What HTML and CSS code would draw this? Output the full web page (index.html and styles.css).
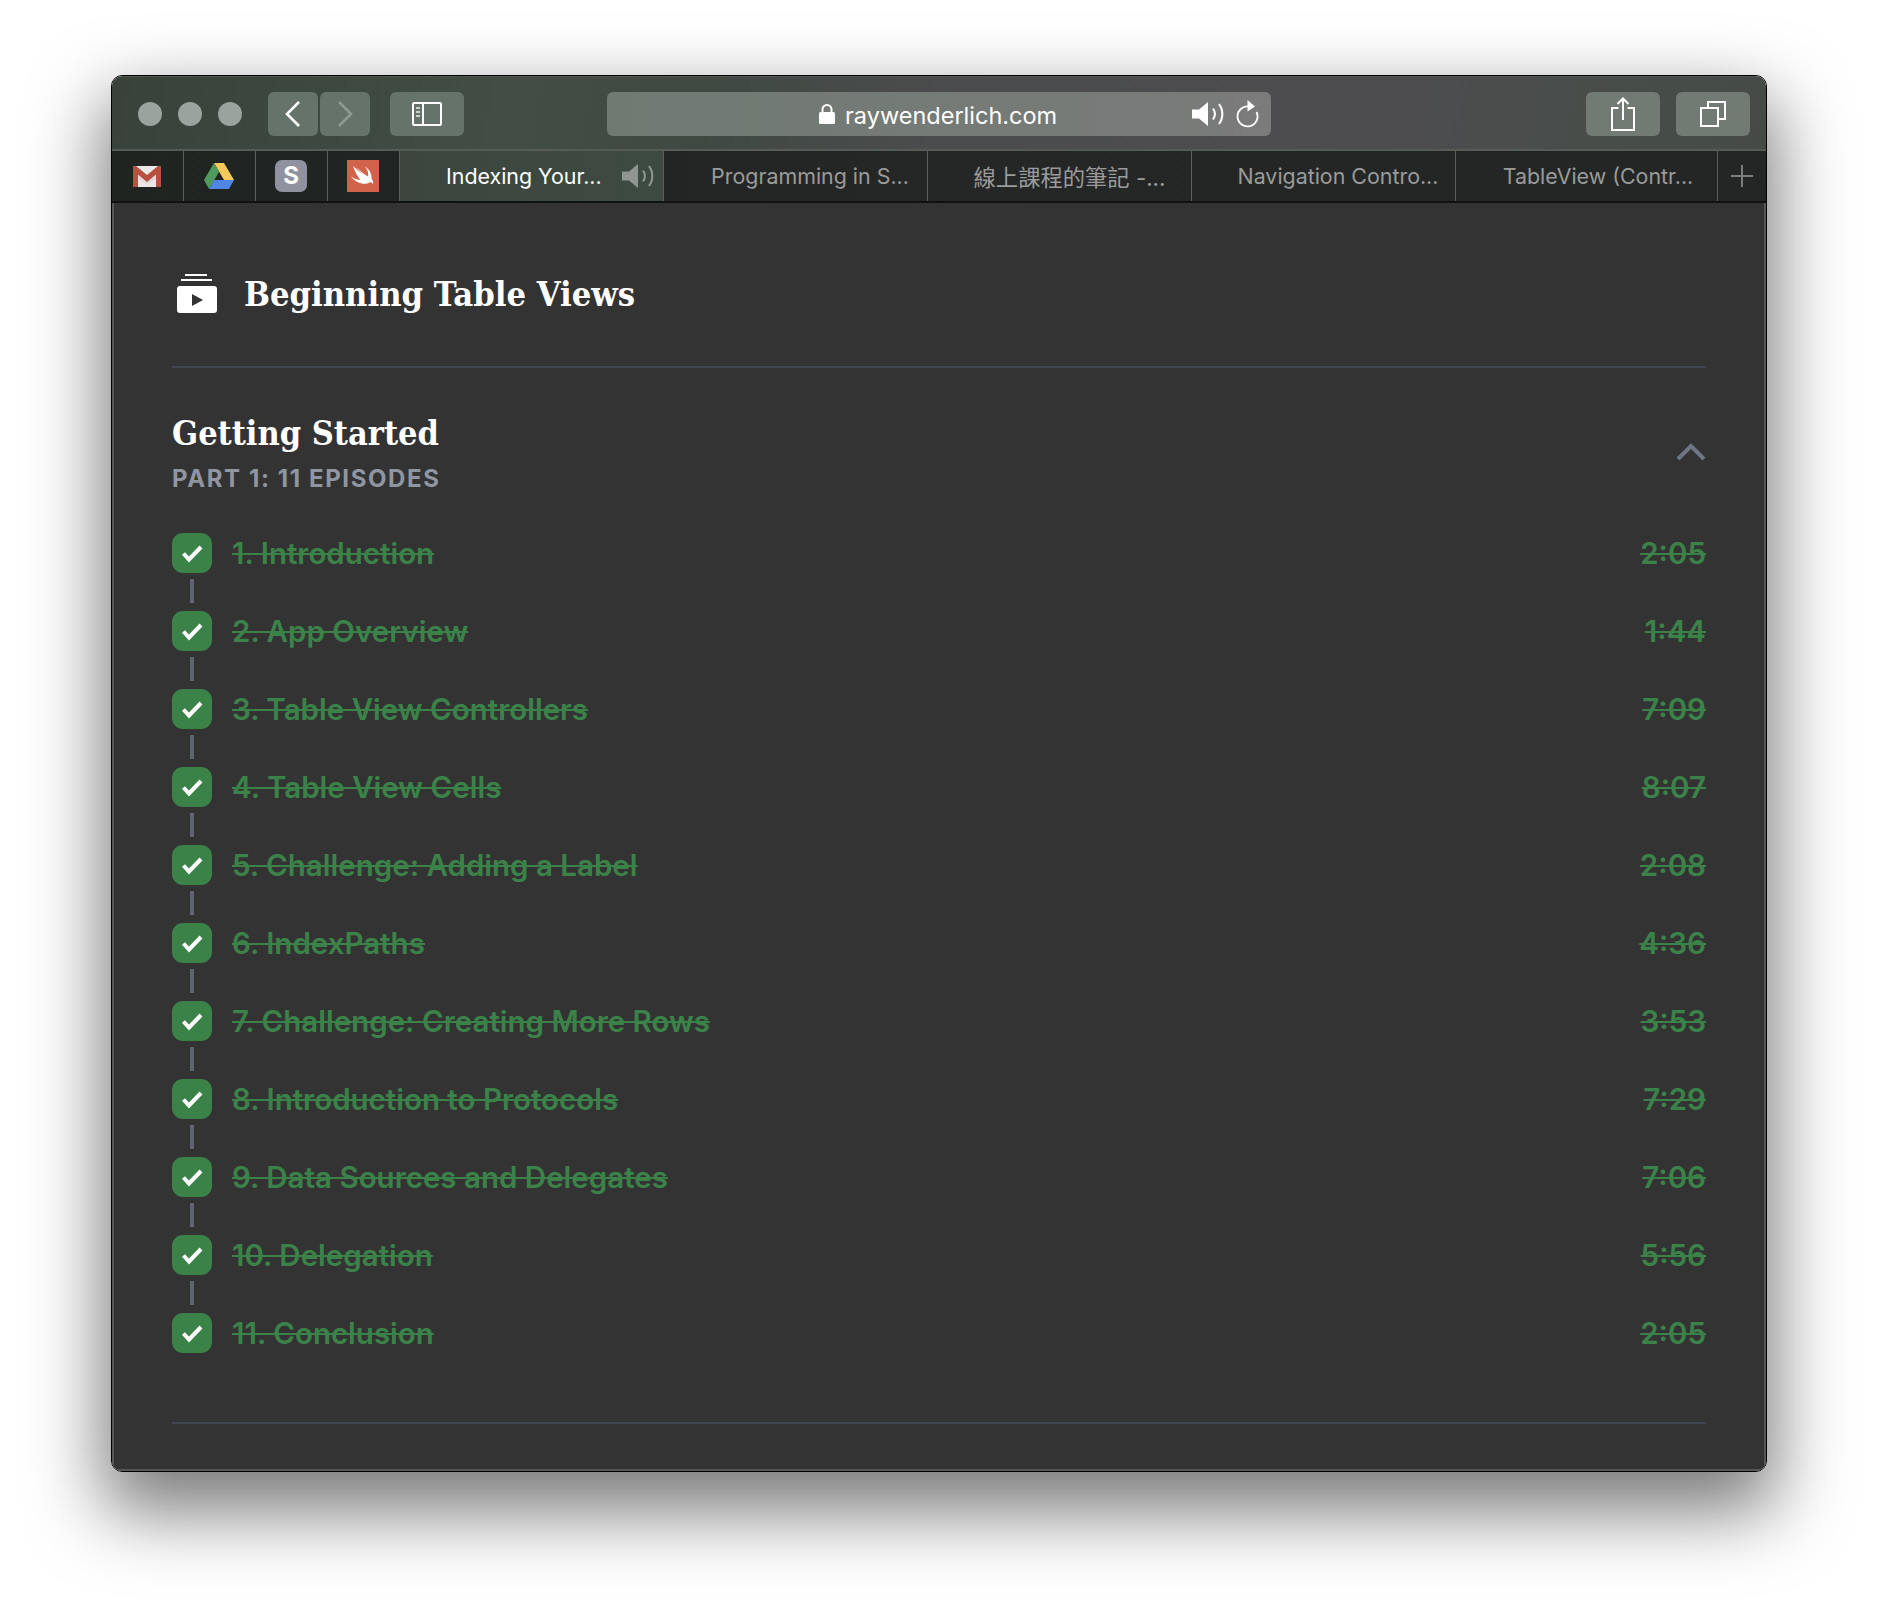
FILE: index.html
```html
<!DOCTYPE html>
<html lang="en">
<head>
  <meta charset="UTF-8" />
  <title>Beginning Table Views</title>
  <link rel="stylesheet" href="styles.css">
</head>

<body>
  <svg class="defs" width="0" height="0">
    <symbol id="speaker" viewBox="0 0 34 26">
      <path d="M0 8.5h7L16 1v24l-9-7.500H0z" fill="currentColor" />
      <path d="M21 7.500c2.500 3.500 2.500 7.500 0 11M27 3c4.500 6 4.500 14 0 20" fill="none" stroke="currentColor" stroke-width="2" />
    </symbol>
    <symbol id="check" viewBox="0 0 40 40">
      <path d="M11.500 20.500l5.500 6L29 14" fill="none" stroke="#fff" stroke-width="4" />
    </symbol>
  </svg>

  <div class="window">
    <div class="toolbar">
      <div class="lights"><i></i><i></i><i></i></div>
      <div class="nav">
        <button class="btn btn-nav">
          <svg width="18" height="28" viewBox="0 0 18 28"><path d="M15 2L3 14l12 12" fill="none" stroke="#fff" stroke-width="2.600" /></svg>
        </button>
        <button class="btn btn-nav">
          <svg width="18" height="28" viewBox="0 0 18 28"><path d="M3 2l12 12L3 26" fill="none" stroke="#8d9a90" stroke-width="2.600" /></svg>
        </button>
      </div>
      <button class="btn btn-side">
        <svg width="30" height="24" viewBox="0 0 30 24" fill="none" stroke="#fff" stroke-width="2">
          <rect x="1" y="1" width="28" height="22" rx="1" />
          <path d="M11 1v22" />
          <path d="M4 6h4M4 10h4M4 14h4" stroke="#c9d0cb" />
        </svg>
      </button>
      <div class="address">
        <svg class="lock" width="16" height="20" viewBox="0 0 16 20">
          <path d="M3.500 9V5.500a4.500 4.500 0 0 1 9 0V9" fill="none" stroke="#fff" stroke-width="2" />
          <rect x="0" y="8" width="16" height="12" rx="1.500" fill="#fff" />
        </svg>
        <span class="url">raywenderlich.com</span>
        <svg class="addr-speaker" width="34" height="26"><use href="#speaker" /></svg>
        <svg class="reload" width="24" height="28" viewBox="0 0 24 28">
          <path d="M14 6.500A10 10 0 1 0 21.500 12" fill="none" stroke="#fff" stroke-width="1.800" />
          <path d="M12.500 0l7.500 6.500-7.500 5z" fill="#fff" />
        </svg>
      </div>
      <button class="btn btn-tool">
        <svg width="24" height="34" viewBox="0 0 24 34" fill="none" stroke="#fff" stroke-width="2">
          <path d="M7.500 11H1v22h22V11h-6.500M12 23V2M6.500 7L12 1.500 17.500 7" />
        </svg>
      </button>
      <button class="btn btn-tool">
        <svg width="26" height="26" viewBox="0 0 26 26" fill="none" stroke="#fff" stroke-width="2">
          <rect x="1" y="7" width="17" height="18" />
          <path d="M8 7V1h17v17h-7" />
        </svg>
      </button>
    </div>

    <div class="tabbar">
      <div class="pin">
        <svg width="28" height="21" viewBox="0 0 28 21">
          <rect width="28" height="21" rx="1.500" fill="#e8e8e8" />
          <path d="M0 2l14 11L28 2v8L14 19 0 10z" fill="#dcdcdc" />
          <path d="M0 1.500C0 .5 1 0 2 0h1l11 9 11-9h1c1 0 2 .5 2 1.500V21h-5V8.500L14 16 5 8.500V21H0z" fill="#b94f3f" />
        </svg>
      </div>
      <div class="pin">
        <svg width="30" height="26" viewBox="0 0 30 26">
          <path d="M10 0h10l10 17h-10z" fill="#f5c95c" />
          <path d="M10 0l5 9L5 26 0 17z" fill="#4f9a5d" />
          <path d="M10 17h20l-5 9H5z" fill="#4f86e4" />
        </svg>
      </div>
      <div class="pin"><span class="s-icon">S</span></div>
      <div class="pin">
        <svg width="32" height="32" viewBox="0 0 32 32">
          <rect width="32" height="32" fill="#d0634a" />
          <path d="M6 6c4 4 8 7 12 10C14 13 11 10 9 7c3 3 8 7 12 9.500 .8-3.500-.5-7-3-10 4 2.500 7 7 6.500 12 1.500 2 2 4 1.500 5.500-1-1.500-2.500-2-3.500-1.500-3 2-8 1.500-12-.5-3-1.500-5-3.500-6.500-5.500 3 2 6.500 3.500 9.500 3.500C11 17 8 12 6 6z" fill="#fff" />
        </svg>
      </div>
      <div class="tab tab-active">
        <span class="tab-title">Indexing Your...</span>
        <svg class="tab-speaker" width="34" height="26"><use href="#speaker" /></svg>
      </div>
      <div class="tab"><span class="tab-title">Programming in S...</span></div>
      <div class="tab tab-cjk"><span class="tab-title">線上課程的筆記 -...</span></div>
      <div class="tab"><span class="tab-title">Navigation Contro...</span></div>
      <div class="tab tab-last"><span class="tab-title">TableView (Contr...</span></div>
      <div class="tab-add">
        <svg width="22" height="22" viewBox="0 0 22 22"><path d="M11 0v22M0 11h22" stroke="#7b7d7c" stroke-width="2" /></svg>
      </div>
    </div>

    <div class="content">
      <div class="course-head">
        <svg class="course-icon" width="40" height="39" viewBox="0 0 40 39">
          <path d="M8 1h22M4 6h31" stroke="#fff" stroke-width="2" />
          <rect y="12" width="40" height="27" rx="3" fill="#fff" />
          <path d="M15 20l11 6-11 6z" fill="#333" />
        </svg>
        <h1>Beginning Table Views</h1>
      </div>

      <div class="part-head">
        <div>
          <h2>Getting Started</h2>
          <div class="part-sub">PART 1: 11 EPISODES</div>
        </div>
        <svg class="chevron" width="30" height="19" viewBox="0 0 30 19"><path d="M2 17L15 4l13 13" fill="none" stroke="#6e7685" stroke-width="4" /></svg>
      </div>

      <ul class="episodes">
        <li class="ep"><div class="mark"><svg class="tick" width="40" height="40"><use href="#check" /></svg><i class="link"></i></div><span class="ep-name">1. Introduction</span><span class="ep-time">2:05</span></li>
        <li class="ep"><div class="mark"><svg class="tick" width="40" height="40"><use href="#check" /></svg><i class="link"></i></div><span class="ep-name">2. App Overview</span><span class="ep-time">1:44</span></li>
        <li class="ep"><div class="mark"><svg class="tick" width="40" height="40"><use href="#check" /></svg><i class="link"></i></div><span class="ep-name">3. Table View Controllers</span><span class="ep-time">7:09</span></li>
        <li class="ep"><div class="mark"><svg class="tick" width="40" height="40"><use href="#check" /></svg><i class="link"></i></div><span class="ep-name">4. Table View Cells</span><span class="ep-time">8:07</span></li>
        <li class="ep"><div class="mark"><svg class="tick" width="40" height="40"><use href="#check" /></svg><i class="link"></i></div><span class="ep-name">5. Challenge: Adding a Label</span><span class="ep-time">2:08</span></li>
        <li class="ep"><div class="mark"><svg class="tick" width="40" height="40"><use href="#check" /></svg><i class="link"></i></div><span class="ep-name">6. IndexPaths</span><span class="ep-time">4:36</span></li>
        <li class="ep"><div class="mark"><svg class="tick" width="40" height="40"><use href="#check" /></svg><i class="link"></i></div><span class="ep-name">7. Challenge: Creating More Rows</span><span class="ep-time">3:53</span></li>
        <li class="ep"><div class="mark"><svg class="tick" width="40" height="40"><use href="#check" /></svg><i class="link"></i></div><span class="ep-name">8. Introduction to Protocols</span><span class="ep-time">7:29</span></li>
        <li class="ep"><div class="mark"><svg class="tick" width="40" height="40"><use href="#check" /></svg><i class="link"></i></div><span class="ep-name">9. Data Sources and Delegates</span><span class="ep-time">7:06</span></li>
        <li class="ep"><div class="mark"><svg class="tick" width="40" height="40"><use href="#check" /></svg><i class="link"></i></div><span class="ep-name">10. Delegation</span><span class="ep-time">5:56</span></li>
        <li class="ep"><div class="mark"><svg class="tick" width="40" height="40"><use href="#check" /></svg></div><span class="ep-name">11. Conclusion</span><span class="ep-time">2:05</span></li>
      </ul>

      <div class="bottom-rule"></div>
    </div>
  </div>
</body>
</html>
```

FILE: styles.css
```css
body {
  margin: 0;
  padding: 75px 111px 148px 111px;
  background: #fff;
  font-family: "Inter", "Noto Sans CJK TC", sans-serif;
}

.defs {
  position: absolute;
}

.window {
  border: 1px solid #000;
  border-radius: 11px;
  overflow: hidden;
  box-shadow: 0 32px 72px 8px rgba(0, 0, 0, 0.52);
}

/* toolbar */
.toolbar {
  height: 75px;
  box-sizing: border-box;
  padding: 15px 16px 0 26px;
  display: flex;
  background: linear-gradient(100deg, #37423a 0%, #424d45 24%, #3f4942 36%, #4b4c4d 50%, #4d4d4f 78%, #464d48 93%, #454a47 100%);
  border-top: 1px solid #555;
  border-bottom: 2px solid #555c57;
}

.lights {
  display: flex;
  gap: 16px;
  padding-top: 10px;
  margin-right: 26px;
}

.lights i {
  width: 24px;
  height: 24px;
  border-radius: 50%;
  background: #9ba39e;
}

.btn {
  height: 44px;
  border: none;
  padding: 0;
  border-radius: 6px;
  background: #66736a;
  display: flex;
  align-items: center;
  justify-content: center;
}

.nav {
  display: flex;
  gap: 2px;
  margin-right: 20px;
}

.btn-nav {
  width: 50px;
}

.btn-side {
  width: 74px;
  margin-right: 143px;
}

.address {
  width: 664px;
  height: 44px;
  margin-right: 315px;
  border-radius: 6px;
  background: linear-gradient(90deg, #707a73, #7a7b7a);
  display: flex;
  align-items: center;
  color: #fff;
  padding-left: 212px;
  box-sizing: border-box;
}

.lock {
  margin-right: 10px;
}

.url {
  font-size: 23.500px;
  width: 211px;
  margin-top: 2px;
  white-space: nowrap;
}

.addr-speaker {
  margin-left: 136px;
  margin-right: 9px;
  width: 34px;
}

.btn-tool {
  width: 74px;
  background: #727a74;
}

.btn-tool + .btn-tool {
  margin-left: 16px;
}

/* tabs */
.tabbar {
  height: 50px;
  display: flex;
  background: linear-gradient(90deg, #1f2421, #252626 50%, #232624);
  border-bottom: 2px solid #111;
}

.pin {
  width: 70px;
  padding-right: 1px;
  border-right: 1px solid #5a5f5c;
  display: flex;
  align-items: center;
  justify-content: center;
}

.s-icon {
  width: 32px;
  height: 32px;
  border-radius: 7px;
  background: #90929f;
  color: #fff;
  font-size: 24px;
  font-weight: 700;
  line-height: 32px;
  text-align: center;
}

.tab {
  width: 264px;
  box-sizing: border-box;
  flex: none;
  padding-left: 29px;
  border-right: 1px solid #5a5f5c;
  display: flex;
  align-items: center;
  justify-content: center;
  color: #9a9b9a;
  font-size: 21.400px;
  white-space: nowrap;
}

.tab-cjk {
  padding-left: 20px;
  font-size: 22.300px;
}

.tab-last {
  width: 262px;
  padding-left: 23px;
}

.tab-active {
  background: linear-gradient(90deg, #3b463f, #3d4a41);
  color: #fff;
  justify-content: flex-start;
  padding-left: 0;
}

.tab-active .tab-title {
  margin-left: 46px;
  width: 176px;
}

.tab-speaker {
  color: #8f9692;
}

.tab-add {
  flex: 1;
  display: flex;
  align-items: center;
  justify-content: center;
}

/* page content */
.content {
  background: #333;
  padding: 71px 60px 0 60px;
  height: 1268px;
  box-sizing: border-box;
  box-shadow: inset 2px 0 0 #565656, inset -2px 0 0 #565656, inset 0 -2px 0 #565656;
}

.course-head {
  display: flex;
  align-items: center;
  height: 39px;
  padding-left: 5px;
  padding-bottom: 53px;
  border-bottom: 2px solid #40454f;
}

.course-icon {
  margin-right: 27px;
}

h1,
h2 {
  margin: 0;
  color: #fff;
  font-family: "DejaVu Serif", serif;
  font-stretch: condensed;
  font-weight: 700;
  white-space: nowrap;
}

h1 {
  font-size: 34.200px;
}

h2 {
  font-size: 34px;
  line-height: 44px;
}

.part-head {
  display: flex;
  justify-content: space-between;
  padding-top: 43px;
  margin-bottom: 40px;
}

.part-sub {
  margin-top: 10px;
  color: #8f96a2;
  font-size: 24px;
  font-weight: 700;
  line-height: 28px;
  letter-spacing: 1.600px;
}

.chevron {
  margin-top: 31px;
}

.episodes {
  list-style: none;
  margin: 0;
  padding: 0;
}

.ep {
  display: flex;
  height: 78px;
  color: #3b8249;
  font-size: 29.500px;
  font-weight: 600;
  line-height: 40px;
  text-decoration: line-through;
}

.ep:last-child {
  height: 40px;
}

.mark {
  width: 40px;
  margin-right: 20px;
  display: flex;
  flex-direction: column;
  align-items: center;
}

.tick {
  display: block;
  flex: none;
  border-radius: 11px;
  background: #3b8249;
}

.link {
  width: 4px;
  height: 24px;
  margin-top: 6px;
  background: #5f636d;
}

.ep-time {
  margin-left: auto;
}

.bottom-rule {
  margin-top: 69px;
  border-top: 2px solid #40454f;
}
```
